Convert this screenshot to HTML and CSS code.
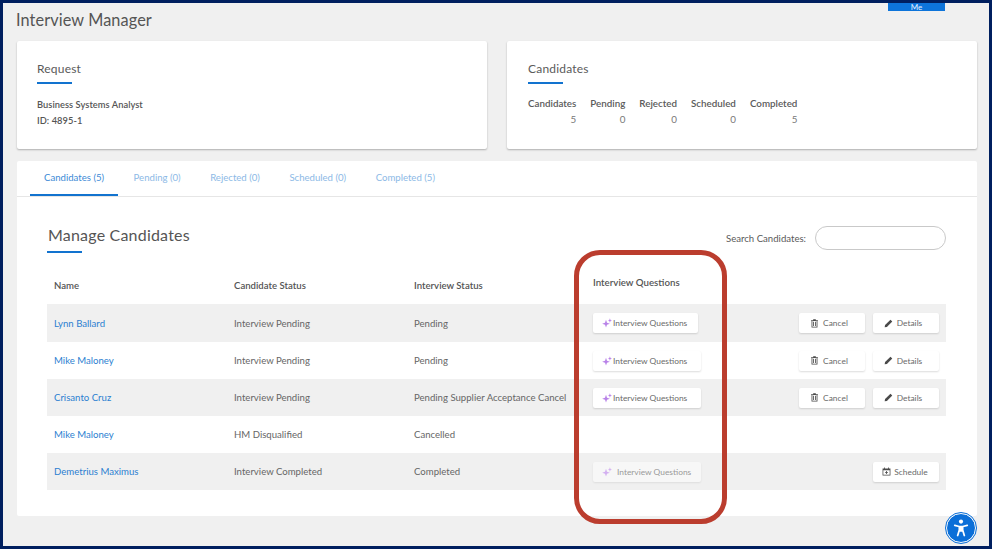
FILE: index.html
```html
<!DOCTYPE html>
<html lang="en">
<head>
<meta charset="utf-8">
<title>Interview Manager</title>
<link rel="stylesheet" href="styles.css">
</head>
<body>
<svg class="defs" width="0" height="0" aria-hidden="true">
  <symbol id="spark" viewBox="0 0 12 12"><path d="M4.800 2.200 6 5.600 9.400 6.800 6 8 4.800 11.400 3.600 8 .2 6.800 3.600 5.600Z"/><path d="M9.500 .3 10.200 2.300 12 3 10.200 3.700 9.500 5.600 8.800 3.700 7 3 8.800 2.300Z"/></symbol>
  <symbol id="trash" viewBox="0 0 10 11"><path d="M.8 1.500H9.200V2.500H8.600V10.500H1.400V2.500H.8ZM3.400.4H6.600V1.500H3.400ZM2.400 2.500V9.500H7.600V2.500ZM3.300 3.400H4.300V8.700H3.300ZM5.700 3.400H6.700V8.700H5.700Z" fill-rule="evenodd"/></symbol>
  <symbol id="pencil" viewBox="0 0 10 10"><path d="M7.200.8 9.200 2.800 3.200 8.800.7 9.300 1.200 6.800Z"/></symbol>
  <symbol id="calendar" viewBox="0 0 11 11"><path d="M.7 1.700H2.500V.5H3.500V1.700H7.500V.5H8.500V1.700H10.300V10.500H.7ZM1.600 4V9.600H9.400V4ZM5 5H6V6.300H7.300V7.200H6V8.500H5V7.200H3.700V6.300H5Z" fill-rule="evenodd"/></symbol>
</svg>
<div class="frame">
  <header class="top">
    <h1>Interview Manager</h1>
    <span class="me">Me</span>
  </header>
  <div class="cards">
    <section class="card">
      <h2 class="rule">Request</h2>
      <p class="req">Business Systems Analyst</p>
      <p class="req">ID: 4895-1</p>
    </section>
    <section class="card">
      <h2 class="rule">Candidates</h2>
      <div class="stats">
        <div class="stat"><b>Candidates</b><span>5</span></div>
        <div class="stat"><b>Pending</b><span>0</span></div>
        <div class="stat"><b>Rejected</b><span>0</span></div>
        <div class="stat"><b>Scheduled</b><span>0</span></div>
        <div class="stat"><b>Completed</b><span>5</span></div>
      </div>
    </section>
  </div>
  <section class="panel">
    <nav class="tabs">
      <a class="tab active">Candidates (5)</a>
      <a class="tab">Pending (0)</a>
      <a class="tab">Rejected (0)</a>
      <a class="tab">Scheduled (0)</a>
      <a class="tab">Completed (5)</a>
    </nav>
    <div class="manage">
      <div class="manage-head">
        <h2 class="rule large">Manage Candidates</h2>
        <label class="search">Search Candidates:<span class="search-box"></span></label>
      </div>
      <div class="row head">
        <span>Name</span><span>Candidate Status</span><span>Interview Status</span><span class="iq-head">Interview Questions</span>
      </div>
      <div class="row shade">
        <a>Lynn Ballard</a><span>Interview Pending</span><span>Pending</span>
        <span><button class="btn iq narrow"><svg class="ico"><use href="#spark"/></svg>Interview Questions</button></span>
        <span class="actions"><button class="btn act"><svg class="ico"><use href="#trash"/></svg>Cancel</button><button class="btn act"><svg class="ico"><use href="#pencil"/></svg>Details</button></span>
      </div>
      <div class="row">
        <a>Mike Maloney</a><span>Interview Pending</span><span>Pending</span>
        <span><button class="btn iq"><svg class="ico"><use href="#spark"/></svg>Interview Questions</button></span>
        <span class="actions"><button class="btn act"><svg class="ico"><use href="#trash"/></svg>Cancel</button><button class="btn act"><svg class="ico"><use href="#pencil"/></svg>Details</button></span>
      </div>
      <div class="row shade">
        <a>Crisanto Cruz</a><span>Interview Pending</span><span>Pending Supplier Acceptance Cancel</span>
        <span><button class="btn iq"><svg class="ico"><use href="#spark"/></svg>Interview Questions</button></span>
        <span class="actions"><button class="btn act"><svg class="ico"><use href="#trash"/></svg>Cancel</button><button class="btn act"><svg class="ico"><use href="#pencil"/></svg>Details</button></span>
      </div>
      <div class="row">
        <a>Mike Maloney</a><span>HM Disqualified</span><span>Cancelled</span>
      </div>
      <div class="row shade">
        <a>Demetrius Maximus</a><span>Interview Completed</span><span>Completed</span>
        <span><button class="btn iq disabled"><svg class="ico"><use href="#spark"/></svg>Interview Questions</button></span>
        <span class="actions"><button class="btn act sched"><svg class="ico"><use href="#calendar"/></svg>Schedule</button></span>
      </div>
    </div>
  </section>
  <div class="highlight"></div>
  <div class="a11y" aria-label="Accessibility">
    <svg viewBox="0 0 24 24"><circle cx="12" cy="4.300" r="2.500" fill="#fff"/><path d="M4.500 8.800 9.800 10.200H14.200L19.500 8.800M10 10.200V14.500L8 21M14 10.200V14.500L16 21M10 14.500 12 15.500 14 14.500" fill="none" stroke="#fff" stroke-width="2.100" stroke-linecap="round" stroke-linejoin="round"/><path d="M10 10H14V15H10Z" fill="#fff"/></svg>
  </div>
</div>
</body>
</html>
```
FILE: styles.css
```css
* { box-sizing: border-box; }
html, body { margin: 0; height: 100%; }
body {
  width: 992px;
  height: 549px;
  overflow: hidden;
  background: #001f5f;
  padding: 3px;
  font-family: "Lato", "Liberation Sans", sans-serif;
  color: #4a4a4a;
}
.defs { position: absolute; }
.frame {
  position: relative;
  width: 986px;
  height: 543px;
  background: #f0f0f0;
  padding: 0 12px 0 14px;
}
.top { height: 38px; display: flex; justify-content: space-between; }
h1 { margin: 7px 0 0 -1px; font-size: 16.300px; line-height: 20px; font-weight: 400; color: #555; letter-spacing: .1px; }
.me {
  width: 57px; height: 8px; margin-right: 32px;
  background: #0d74da; color: #e8f2ff;
  font-size: 8px; line-height: 8px; text-align: center; overflow: hidden;
}
.cards { display: flex; gap: 20px; }
.card {
  width: 470px; height: 108px;
  background: #fff; border-radius: 2px;
  box-shadow: 0 1px 2px rgba(0,0,0,.28);
  padding: 20px;
}
.card + .card { padding-left: 21px; }
h2 { margin: 0; font-weight: 400; }
.rule { position: relative; font-size: 12px; line-height: 15px; color: #5a5a5a; letter-spacing: .2px; height: 23px; }
.rule::after {
  content: ""; position: absolute; left: 0; bottom: 0;
  width: 35px; height: 2px; background: #1273cf;
}
.req { margin: 15px 0 0; font-size: 9.300px; line-height: 12px; font-weight: 600; color: #555; letter-spacing: .05px; }
.req + .req { margin-top: 4px; }
.stats { display: flex; gap: 14px; margin-top: 13px; font-size: 9.800px; line-height: 12px; }
.stat { display: flex; flex-direction: column; gap: 4px; text-align: right; color: #777; }
.stat b { font-weight: 600; color: #5a5a5a; }
.panel {
  width: 960px; height: 355px; margin-top: 12px;
  background: #fff; border-radius: 2px;
}
.tabs { height: 36px; display: flex; padding-left: 13px; border-bottom: 1px solid #e6e6e6; font-size: 9.600px; }
.tab { padding: 0 14px; line-height: 34px; height: 35px; color: #8cb9e6; margin-right: 1.500px; }
.tab.active { color: #3c8ad6; border-bottom: 2px solid #1273cf; }
.manage { padding: 0 31px 0 30px; }
.manage-head { height: 86px; display: flex; justify-content: space-between; align-items: flex-start; }
.rule.large { font-size: 16px; line-height: 20px; margin-top: 28px; margin-left: 1px; height: 28px; letter-spacing: .2px; color: #555; }
.rule.large::after { left: -1px; }
.search { margin-top: 29px; display: flex; align-items: center; gap: 9px; font-size: 9.600px; color: #5a5a5a; }
.search-box { width: 131px; height: 24px; border: 1px solid #c9c9c9; border-radius: 12px; background: #fff; }
.row {
  display: grid;
  grid-template-columns: 180px 180px 179px 206px 1fr;
  align-items: center;
  height: 37px;
  padding-left: 7px;
  font-size: 9.600px;
  color: #666;
  white-space: nowrap;
}
.row a { color: #2c7fd1; }
.row.shade { background: #f0f0f0; }
.row.head { height: 38px; margin-top: -17px; font-weight: 600; color: #555; }
.row.head + .row { height: 38px; }
.iq-head { position: relative; top: -3px; font-size: 9.700px; }
.actions { display: flex; justify-content: flex-end; gap: 8px; padding-right: 7px; }
.btn {
  height: 20px; padding: 0;
  display: inline-flex; align-items: center; justify-content: center;
  background: #fff; border: 0; border-radius: 2px;
  box-shadow: 0 1px 2px rgba(0,0,0,.14);
  font: 400 8.400px "Lato", "Liberation Sans", sans-serif; color: #6a6a6a;
}
.btn.act { width: 66px; padding-right: 6px; }
.btn.act.sched { padding-right: 2px; }
.btn.iq { width: 108px; justify-content: flex-start; padding-left: 9px; }
.btn.iq.narrow { width: 105px; }
.btn.iq.disabled { color: #9a9a9a; background: #f7f7f7; box-shadow: 0 1px 2px rgba(0,0,0,.08); }
.ico { width: 9px; height: 9px; margin-right: 4px; fill: #4a4a4a; flex: none; }
.sched .ico { margin-right: 3px; }
.iq .ico { width: 10px; height: 10px; margin-right: 1px; fill: #b983e8; }
.iq.disabled .ico { fill: #d3b0f0; margin-right: 5px; }
.highlight {
  position: absolute;
  left: 571px; top: 247px;
  width: 153px; height: 274px;
  border: 5px solid #bb3d2e;
  border-radius: 26px;
}
.a11y {
  position: absolute;
  left: 943px; top: 510px;
  width: 30px; height: 30px;
  border-radius: 50%;
  background: #0b6fd8;
  border: 1px solid #fff;
  outline: 1px solid #0b6fd8;
  display: flex; align-items: center; justify-content: center;
}
.a11y svg { width: 20px; height: 20px; }
```
